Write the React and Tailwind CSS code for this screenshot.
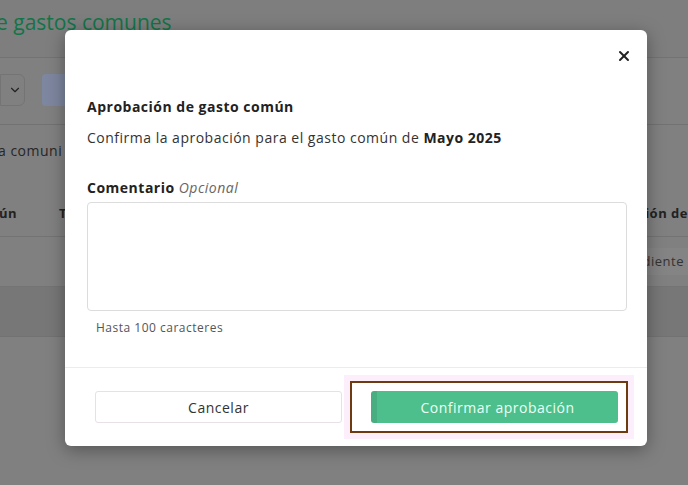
import { ChevronDown, X } from 'lucide-react'

const font = { fontFamily: '"Open Sans", "Noto Sans", sans-serif' }

function Background() {
  return (
    <div className="absolute inset-0 bg-[#808080] overflow-hidden">
      <div className="h-[58px] border-b border-[#737373] bg-[#7e7e7e] overflow-hidden">
        <h1 className="text-[21px] leading-none tracking-normal text-[#137448] whitespace-nowrap -ml-[4px] mt-[12px]">
          e gastos comunes
        </h1>
      </div>
      <div className="h-[67px] border-b border-[#727272] flex items-center gap-[17px] pb-[2px]">
        <div className="w-[25px] h-[32px] rounded-r-md border border-[#747474] flex items-center justify-end pr-[2px]">
          <ChevronDown size={14} className="text-[#222]" />
        </div>
        <div className="w-[60px] h-[32px] rounded bg-[#7d879f]" />
      </div>
      <p className="text-[14px] text-[#262626] mt-[15px] whitespace-nowrap -ml-[2px]">a comuni</p>
      <div className="mt-[36px] h-[40px] border-b border-[#737373] flex items-center justify-between text-[13px] font-bold text-[#222] pb-[6px]">
        <div className="flex gap-[42px] -ml-[1px]">
          <span>ún</span>
          <span>T</span>
        </div>
        <span className="whitespace-nowrap">sión de</span>
      </div>
      <div className="h-[50px] border-b border-[#747474] flex items-center justify-end">
        <span className="bg-[#848484] rounded-l-md pl-[10px] pr-[4px] py-[4px] text-[13px] text-[#333]">diente</span>
      </div>
      <div className="h-[50px] bg-[#777777] border-b border-[#727272]" />
    </div>
  )
}

export default function App() {
  return (
    <div className="relative w-[688px] h-[485px] overflow-hidden tracking-[0.5px]" style={font}>
      <Background />
      <div className="absolute left-[65px] top-[30px] w-[582px] h-[416px] bg-white rounded-[6px] shadow-[0_4px_18px_rgba(0,0,0,0.35)] flex flex-col">
        <div className="flex justify-end pt-[17px] pr-[14px]">
          <button className="w-[18px] h-[18px] flex items-center justify-center text-[#222]">
            <X size={16} strokeWidth={3} />
          </button>
        </div>
        <div className="px-[22px] pt-[32px] flex-1">
          <h2 className="text-[14px] font-bold text-[#222] leading-[20px]">Aprobación de gasto común</h2>
          <p className="mt-[11px] text-[14px] text-[#333] leading-[20px]">
            Confirma la aprobación para el gasto común de <span className="font-bold text-[#222]">Mayo 2025</span>
          </p>
          <label className="block mt-[30px] text-[14px] leading-[20px] font-bold text-[#222]">
            Comentario <span className="font-normal italic text-[#666]">Opcional</span>
          </label>
          <textarea className="block mt-[4px] w-[540px] h-[109px] border border-[#dcdcdc] rounded-[4px] resize-none outline-none" />
          <p className="mt-[9px] ml-[9px] text-[12px] text-[#555] leading-[16px]">Hasta 100 caracteres</p>
        </div>
        <div className="border-t border-[#ececec] h-[79px] flex items-center pl-[30px] gap-[8px]">
          <button className="shrink-0 w-[247px] h-[32px] border border-[#e8e0e6] rounded-[3px] text-[14px] text-[#333] bg-white">
            Cancelar
          </button>
          <div className="shrink-0 border-2 border-[#6e3a10] bg-white pl-[19px] pr-[8px] py-[8px] shadow-[0_0_0_6px_#fdeefb]">
            <button className="block w-[247px] h-[32px] rounded-[3px] bg-[#4cbf8c] text-[14px] text-[#eafff5] border-l-[6px] border-[#48ad80]">
              Confirmar aprobación
            </button>
          </div>
        </div>
      </div>
    </div>
  )
}
